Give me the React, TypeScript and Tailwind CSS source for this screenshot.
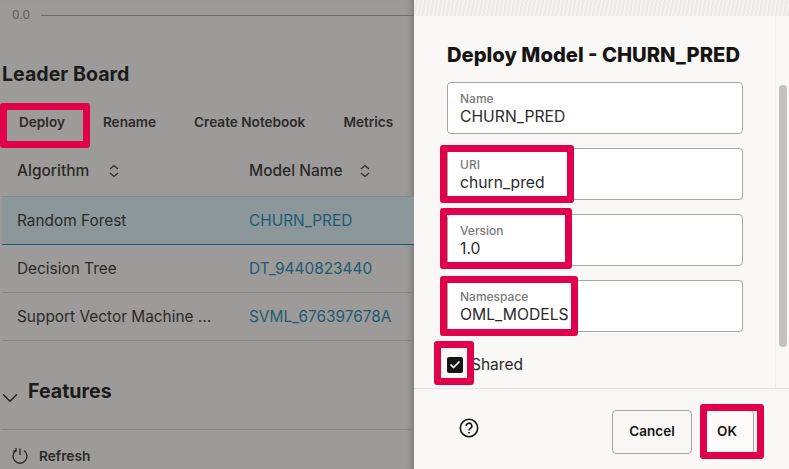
import { Check, ChevronDown } from "lucide-react";

const Highlight = ({ className }: { className: string }) => (
  <div className={`absolute border-[7px] border-[#e0004c] rounded-[3px] ${className}`} />
);

const SortIcon = () => (
  <svg width="12" height="14" viewBox="0 0 12 14" fill="none" stroke="#2b2a28" strokeWidth="1.2">
    <path d="M2 5 L6 1.5 L10 5" />
    <path d="M2 9 L6 12.5 L10 9" />
  </svg>
);

const RefreshIcon = () => (
  <svg width="18" height="18" viewBox="0 0 18 18" fill="none" stroke="#2b2a28" strokeWidth="1.4">
    <path d="M5 3.5 A7 7 0 1 0 13 3.5" />
    <path d="M5 1 L5 4 L2.2 4" />
    <path d="M9 1.5 L9 8" />
  </svg>
);

const Field = ({ label, value }: { label: string; value: string }) => (
  <div className="h-[52px] w-[296px] rounded-[4px] border border-[#a8a6a3] bg-white px-[12px] pt-[9px]">
    <div className="text-[12px] leading-[14px] font-medium text-[#7a7977]">{label}</div>
    <div className="mt-px text-[15.7px] leading-[20px] text-[#2b2a28]">{value}</div>
  </div>
);

const rows = [
  { algo: "Random Forest", model: "CHURN_PRED", selected: true },
  { algo: "Decision Tree", model: "DT_9440823440", selected: false },
  { algo: "Support Vector Machine ...", model: "SVML_676397678A", selected: false },
];

export default function App() {
  return (
    <div className="relative flex h-[469px] w-[789px] overflow-hidden font-['Inter',sans-serif] text-[#1f1e1c]">
      {/* dimmed page behind the drawer */}
      <div className="flex w-[414px] shrink-0 flex-col bg-[#9c9b99] shadow-[inset_-8px_0_8px_-8px_rgba(0,0,0,0.35)]">
        <div className="flex h-[30px] items-center gap-[11px] pl-[12px]">
          <span className="text-[12px] text-[#5f5e5c]">0.0</span>
          <div className="h-px flex-1 bg-[#6f6e6c]" />
        </div>
        <h2 className="mt-[33px] pl-[2px] text-[19.6px] leading-[22px] font-bold text-[#1c1b1a]">Leader Board</h2>
        <div className="mt-[26px] flex h-[22px] items-center text-[13.6px] font-semibold whitespace-nowrap text-[#2b2a28]">
          <span className="ml-[19px]">Deploy</span>
          <span className="ml-[38px]">Rename</span>
          <span className="ml-[38px]">Create Notebook</span>
          <span className="ml-[38px]">Metrics</span>
        </div>
        <div className="mt-[16px] flex h-[47px] items-start pt-[11px] text-[15.5px] leading-[22px] font-medium text-[#2b2a28]">
          <div className="flex w-[249px] items-center gap-[19px] pl-[17px]">
            Algorithm <SortIcon />
          </div>
          <div className="flex items-center gap-[16px]">
            Model Name <SortIcon />
          </div>
        </div>
        <div className="ml-[2px] border-t border-[#8a8987]">
          {rows.map((r) => (
            <div
              key={r.algo}
              className={`flex h-[48px] items-center border-b text-[15.4px] ${
                r.selected ? "border-[#1d5c70] bg-[#8b979b]" : "border-[#868583]"
              }`}
            >
              <div className="w-[247px] pl-[15px] text-[#2b2a28]">{r.algo}</div>
              <div className="text-[#1f5a70]">{r.model}</div>
            </div>
          ))}
        </div>
        <div className="mt-[37px] flex h-[28px] items-center">
          <ChevronDown size={26} strokeWidth={1.3} className="mt-[11px] ml-[-3px] shrink-0 text-[#1f1e1c]" />
          <h2 className="ml-[5px] text-[19.6px] font-bold text-[#1c1b1a]">Features</h2>
        </div>
        <div className="mt-[23px] ml-px h-px bg-[#868583]" />
        <div className="mt-[16px] flex items-center gap-[10px] pl-[11px] text-[13.7px] font-semibold text-[#2b2a28]">
          <RefreshIcon />
          Refresh
        </div>
      </div>

      {/* deploy drawer */}
      <div className="relative flex flex-1 flex-col bg-[#f9f8f6]">
        <div className="h-[16px] bg-[repeating-linear-gradient(100deg,#f3f2ef_0px,#f3f2ef_2px,#ecebe8_2px,#ecebe8_4px)]" />
        <div className="flex flex-1">
          <div className="flex-1 pl-[33px]">
            <h1 className="mt-[27px] text-[20.2px] leading-[24px] font-extrabold whitespace-nowrap text-[#161513]">
              Deploy Model - CHURN_PRED
            </h1>
            <div className="mt-[15px] flex flex-col gap-[14px]">
              <Field label="Name" value="CHURN_PRED" />
              <Field label="URI" value="churn_pred" />
              <Field label="Version" value="1.0" />
              <Field label="Namespace" value="OML_MODELS" />
            </div>
            <div className="mt-[23px] flex items-center gap-[8px]">
              <div className="flex h-[16px] w-[16px] items-center justify-center rounded-[2px] bg-[#161513]">
                <Check size={12} strokeWidth={3.5} className="text-white" />
              </div>
              <span className="text-[15.5px] leading-[20px] text-[#2b2a28]">Shared</span>
            </div>
          </div>
          <div className="w-[14px] shrink-0 border-l border-[#efeeeb] pt-[69px] pl-[3px]">
            <div className="h-[262px] w-[8px] rounded-[4px] bg-[#c2c1bf]" />
          </div>
        </div>
        <div className="flex h-[81px] shrink-0 items-center border-t border-[#e4e2df] pr-[35px] pl-[45px]">
          <svg className="mb-[2px]" width="20" height="20" viewBox="0 0 20 20" fill="none" stroke="#161513" strokeWidth="1.6">
            <circle cx="10" cy="10" r="8.7" />
            <path d="M7.2 8 A2.8 2.8 0 1 1 11.4 10.4 C10.4 11 10 11.5 10 12.5" />
            <path d="M10 14 L10 15.6" />
          </svg>
          <div className="mt-[5px] ml-auto flex h-[44px] items-center gap-[8px] text-[13.5px] font-semibold text-[#161513]">
            <div className="flex h-[44px] w-[80px] items-center justify-center rounded-[4px] border border-[#a8a6a3]">
              Cancel
            </div>
            <div className="flex h-[44px] w-[54px] items-center justify-center rounded-[4px] border border-[#a8a6a3] bg-[#fcfbfa]">
              OK
            </div>
          </div>
        </div>
      </div>

      {/* red annotation boxes */}
      <Highlight className="top-[103px] left-0 h-[45px] w-[90px]" />
      <Highlight className="top-[145px] left-[440px] h-[58px] w-[134px]" />
      <Highlight className="top-[208px] left-[440px] h-[61px] w-[132px]" />
      <Highlight className="top-[276px] left-[440px] h-[60px] w-[138px]" />
      <Highlight className="top-[341px] left-[434px] h-[44px] w-[40px]" />
      <Highlight className="top-[404px] left-[700px] h-[55px] w-[64px]" />
    </div>
  );
}
